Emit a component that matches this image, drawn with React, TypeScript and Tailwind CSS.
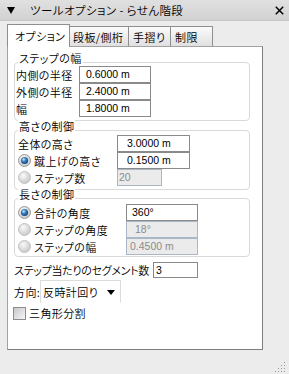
import React from "react";

const num = "font-['Liberation_Sans',Arial,sans-serif] text-[10.5px] [font-feature-settings:normal] tracking-normal";

function Field({ cls, value, disabled }: { cls: string; value: string; disabled?: boolean }) {
  return (
    <div
      className={
        (disabled
          ? "bg-[#ebebeb] border border-[#a9b7c7] text-[#8c8c8c] "
          : "bg-white border border-[#8a8a8a] text-black ") +
        "h-[17px] flex items-center leading-none shrink-0 " +
        num +
        " " +
        cls
      }
    >
      {value}
    </div>
  );
}

function Radio({ checked }: { checked?: boolean }) {
  return (
    <svg width="13" height="13" viewBox="0 0 13 13" className="shrink-0">
      <defs>
        <radialGradient id="rOuter" cx="40%" cy="35%" r="70%">
          <stop offset="0" stopColor="#fafafa" />
          <stop offset="1" stopColor="#c4c4c4" />
        </radialGradient>
        <radialGradient id="rBlue" cx="40%" cy="35%" r="70%">
          <stop offset="0" stopColor="#7fc0f0" />
          <stop offset="0.6" stopColor="#2a6aa8" />
          <stop offset="1" stopColor="#123e6e" />
        </radialGradient>
      </defs>
      <circle cx="6.5" cy="6.5" r="6" fill="url(#rOuter)" stroke={checked ? "#9a9a9a" : "#c2c2c2"} strokeWidth="1" />
      {checked && <circle cx="6.5" cy="6.5" r="3.6" fill="url(#rBlue)" />}
      {checked && <circle cx="5.6" cy="5.5" r="1.1" fill="#cfe8ff" opacity="0.8" />}
    </svg>
  );
}

function Group({ title, cls, children }: { title: string; cls: string; children: React.ReactNode }) {
  return (
    <div className={"relative border border-[#d9d9d9] rounded-[4px] w-[236px] flex flex-col " + cls}>
      <span className="absolute top-[-12px] left-[3px] bg-white px-[1px] leading-[14px] whitespace-nowrap">{title}</span>
      {children}
    </div>
  );
}

export default function App() {
  return (
    <div className="w-[289px] h-[374px] bg-[#ececec] relative overflow-hidden font-['Noto_Sans_CJK_JP',sans-serif] font-[350] [font-feature-settings:'palt'] text-[11px] tracking-[0.4px] leading-[14px] text-black">
      {/* title bar */}
      <div className="h-[21px] flex items-center bg-linear-to-b from-[#e0e0e0] to-[#d2d2d2] border-b border-[#c6c6c6]">
        <svg width="8" height="7" viewBox="0 0 8 7" className="ml-[7px]">
          <polygon points="0,0 8,0 4,7" fill="#000" />
        </svg>
        <span className="ml-[15px] whitespace-nowrap text-[11.5px]">ツールオプション - らせん階段</span>
        <svg width="9" height="9" viewBox="0 0 9 9" className="ml-auto mr-[5px]">
          <path d="M0.8 0.8 L8.2 8.2 M8.2 0.8 L0.8 8.2" stroke="#000" strokeWidth="1.5" />
        </svg>
      </div>

      {/* tabs */}
      <div className="mt-[3px] h-[22px] flex items-end pl-[7px]">
        <div className="relative z-10 mb-[-1px] h-[23px] w-[63px] bg-white border border-b-0 border-[#8f8f8f] flex items-center pl-[7px] whitespace-nowrap">
          オプション
        </div>
        <div className="h-[20px] w-[59px] bg-linear-to-b from-[#fbfbfb] to-[#e0e0e0] border-t border-r border-[#8f8f8f] flex items-center pl-[3px] whitespace-nowrap">
          段板/側桁
        </div>
        <div className="h-[20px] w-[42px] bg-linear-to-b from-[#fbfbfb] to-[#e0e0e0] border-t border-r border-[#8f8f8f] flex items-center pl-[4px] whitespace-nowrap">
          手摺り
        </div>
        <div className="h-[20px] w-[42px] bg-linear-to-b from-[#fbfbfb] to-[#e0e0e0] border-t border-r border-[#8f8f8f] flex items-center pl-[4px] whitespace-nowrap">
          制限
        </div>
      </div>

      {/* panel */}
      <div className="ml-[7px] w-[256px] h-[304px] bg-white border border-[#a2a2a2] border-r-[#7e7e7e] border-b-[#7e7e7e] flex flex-col pl-[6px]">
        <Group title="ステップの幅" cls="mt-[15px] pt-[3px] pb-[3px]">
          <div className="flex items-center">
            <span className="w-[64px] pl-[1px] whitespace-nowrap">内側の半径</span>
            <Field cls="w-[72px] pl-[6px]" value="0.6000 m" />
          </div>
          <div className="flex items-center">
            <span className="w-[64px] pl-[1px] whitespace-nowrap">外側の半径</span>
            <Field cls="w-[72px] pl-[6px]" value="2.4000 m" />
          </div>
          <div className="flex items-center">
            <span className="w-[64px] pl-[1px]">幅</span>
            <Field cls="w-[72px] pl-[6px]" value="1.8000 m" />
          </div>
        </Group>

        <Group title="高さの制御" cls="mt-[9px] pt-[4px] pb-[3px]">
          <div className="flex items-center">
            <span className="w-[102px] pl-[3px] whitespace-nowrap">全体の高さ</span>
            <Field cls="w-[73px] pl-[9px]" value="3.0000 m" />
          </div>
          <div className="flex items-center">
            <div className="w-[102px] pl-[3px] flex items-center gap-[3px]">
              <Radio checked />
              <span className="whitespace-nowrap">蹴上げの高さ</span>
            </div>
            <Field cls="w-[73px] pl-[9px]" value="0.1500 m" />
          </div>
          <div className="flex items-center">
            <div className="w-[102px] pl-[3px] flex items-center gap-[3px]">
              <Radio />
              <span className="whitespace-nowrap">ステップ数</span>
            </div>
            <Field cls="w-[45px] pl-[1px]" value="20" disabled />
          </div>
        </Group>

        <Group title="長さの制御" cls="mt-[8px] pt-[5px] pb-[1px]">
          <div className="flex items-center">
            <div className="w-[111px] pl-[3px] flex items-center gap-[3px]">
              <Radio checked />
              <span className="whitespace-nowrap">合計の角度</span>
            </div>
            <Field cls="w-[72px] pl-[5px]" value="360°" />
          </div>
          <div className="flex items-center">
            <div className="w-[111px] pl-[3px] flex items-center gap-[3px]">
              <Radio />
              <span className="whitespace-nowrap">ステップの角度</span>
            </div>
            <Field cls="w-[72px] pl-[8px]" value="18°" disabled />
          </div>
          <div className="flex items-center">
            <div className="w-[111px] pl-[3px] flex items-center gap-[3px]">
              <Radio />
              <span className="whitespace-nowrap">ステップの幅</span>
            </div>
            <Field cls="w-[72px] pl-[3px]" value="0.4500 m" disabled />
          </div>
        </Group>

        <div className="mt-[5px] h-[16px] flex items-center">
          <span className="w-[139px] whitespace-nowrap tracking-[-0.3px]">ステップ当たりのセグメント数</span>
          <div className={"h-[16px] w-[45px] border border-[#8a8a8a] bg-white flex items-center pl-[2px] leading-none shrink-0 " + num}>3</div>
        </div>

        <div className="mt-[2px] flex items-center">
          <span className="w-[26px] shrink-0 whitespace-nowrap">方向:</span>
          <div className="h-[23px] w-[81px] shrink-0 border border-[#dcdcdc] border-b-transparent bg-white flex items-center pl-[2px]">
            <span className="whitespace-nowrap">反時計回り</span>
            <svg width="8" height="5" viewBox="0 0 8 5" className="ml-auto mr-[5px] mt-[2px]">
              <polygon points="0,0 8,0 4,5" fill="#000" />
            </svg>
          </div>
        </div>

        <div className="mt-[3px] flex items-center">
          <div className="h-[13px] w-[13px] border border-[#8e8e8e] bg-linear-to-br from-[#c9c9c9] to-[#f6f6f6] shrink-0 ml-[-1px]" />
          <span className="ml-[3px] whitespace-nowrap">三角形分割</span>
        </div>
      </div>

      {/* resize grip */}
      <svg width="12" height="11" viewBox="0 0 12 11" className="absolute right-[2px] bottom-[2px]">
        <g fill="#9a9a9a">
          <rect x="9" y="1" width="1" height="1" />
          <rect x="9" y="4" width="1" height="1" />
          <rect x="6" y="4" width="1" height="1" />
          <rect x="9" y="7" width="1" height="1" />
          <rect x="6" y="7" width="1" height="1" />
          <rect x="3" y="7" width="1" height="1" />
          <rect x="9" y="10" width="1" height="1" />
          <rect x="6" y="10" width="1" height="1" />
          <rect x="3" y="10" width="1" height="1" />
          <rect x="0" y="10" width="1" height="1" />
        </g>
      </svg>
    </div>
  );
}
